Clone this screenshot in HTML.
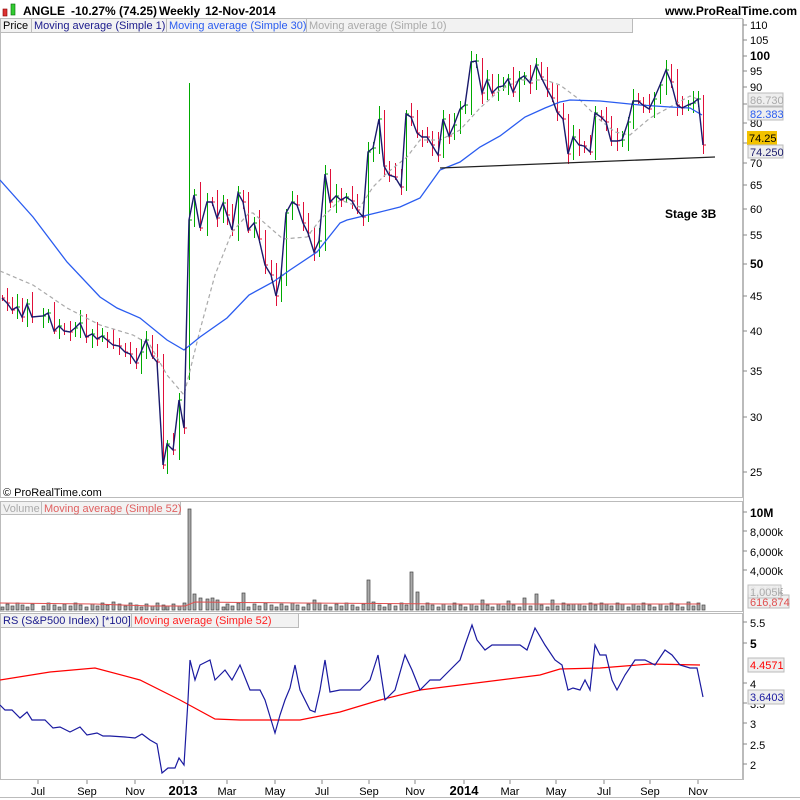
<!DOCTYPE html>
<html><head><meta charset="utf-8"><style>
body{margin:0;background:#fff;width:800px;height:800px;overflow:hidden;font-family:"Liberation Sans",Arial,sans-serif}
svg{display:block}
text{font-family:"Liberation Sans",Arial,sans-serif}
</style></head><body>
<svg id="s" width="800" height="800" xmlns="http://www.w3.org/2000/svg">
<rect width="800" height="800" fill="#fff"/>
<!-- header -->
<rect x="3" y="9" width="4" height="7" fill="#d33" stroke="#800" stroke-width="0.6"/>
<rect x="11" y="4" width="4" height="11" fill="#3c3" stroke="#060" stroke-width="0.6"/>
<text x="23" y="15" font-size="12" font-weight="bold">ANGLE</text>
<text x="71" y="15" font-size="12" font-weight="bold">-10.27% (74.25)</text>
<text x="159" y="15" font-size="12" font-weight="bold">Weekly</text>
<text x="205" y="15" font-size="12" font-weight="bold">12-Nov-2014</text>
<text x="797" y="15" font-size="12" font-weight="bold" text-anchor="end">www.ProRealTime.com</text>
<!-- panel borders -->
<rect x="0.5" y="18.5" width="742" height="479" fill="none" stroke="#bbb"/>
<rect x="0.5" y="501.5" width="742" height="110" fill="none" stroke="#bbb"/>
<rect x="0.5" y="613.5" width="742" height="166" fill="none" stroke="#bbb"/>
<line x1="0" y1="797.5" x2="800" y2="797.5" stroke="#bbb"/>
<!-- legends -->
<rect x="0.5" y="18.5" width="632" height="14" fill="#f2f2f2" stroke="#bbb"/>
<text x="3" y="29" font-size="11" fill="#000">Price</text>
<line x1="31.5" y1="19" x2="31.5" y2="32" stroke="#bbb"/>
<text x="34" y="29" font-size="11" fill="#1a1a8c">Moving average (Simple 1)</text>
<line x1="166.5" y1="19" x2="166.5" y2="32" stroke="#bbb"/>
<text x="169" y="29" font-size="11" fill="#2a5cf0">Moving average (Simple 30)</text>
<line x1="306.5" y1="19" x2="306.5" y2="32" stroke="#bbb"/>
<text x="309" y="29" font-size="11" fill="#aaa">Moving average (Simple 10)</text>
<text x="3" y="496" font-size="11">© ProRealTime.com</text>
<rect x="0.5" y="501.5" width="180" height="13" fill="#f2f2f2" stroke="#bbb"/>
<text x="3" y="512" font-size="11" fill="#aaa">Volume</text>
<line x1="41.5" y1="502" x2="41.5" y2="514" stroke="#bbb"/>
<text x="44" y="512" font-size="11" fill="#e06060">Moving average (Simple 52)</text>
<rect x="0.5" y="613.5" width="298" height="14" fill="#f2f2f2" stroke="#bbb"/>
<text x="3" y="624" font-size="11" fill="#1a1a8c">RS (S&amp;P500 Index) [*100]</text>
<line x1="131.5" y1="614" x2="131.5" y2="627" stroke="#bbb"/>
<text x="134" y="624" font-size="11" fill="#f22">Moving average (Simple 52)</text>
<text x="665" y="218" font-size="12" font-weight="bold">Stage 3B</text>
<g id="g"></g>
</svg>
<script>
var g=document.getElementById('g'),h='';
function pl(pts,st,w,extra){h+='<polyline fill="none" stroke="'+st+'" stroke-width="'+w+'" '+(extra||'')+' points="'+pts.map(function(p){return p.join(',')}).join(' ')+'"/>';}
var C=[[2,298],[7,303],[12,310],[17,307],[22,317],[27,304],[32,317],[43,316],[48,313],[54,331],[59,326],[64,331],[70,332],[75,328],[80,323],[86,337],[92,334],[97,339],[102,336],[107,340],[113,345],[119,346],[125,352],[130,354],[136,363],[141,352],[146,340],[152,356],[157,362],[163,465],[167,444],[173,450],[179,400],[184,428],[189,220],[194,195],[200,228],[207,202],[212,202],[217,218],[223,203],[227,215],[232,230],[238,193],[243,202],[248,230],[254,223],[259,239],[265,265],[271,275],[276,296],[281,275],[286,213],[292,202],[297,205],[303,223],[308,233],[314,252],[319,241],[325,174],[330,202],[336,196],[341,200],[346,197],[352,201],[357,210],[363,217],[368,152],[373,148],[379,119],[384,166],[389,175],[395,177],[401,187],[406,114],[411,117],[417,133],[422,137],[427,137],[432,145],[438,155],[443,119],[449,136],[454,125],[460,109],[465,105],[471,62],[476,61],[482,93],[487,80],[492,93],[498,87],[503,86],[508,79],[513,92],[519,79],[524,76],[530,83],[536,65],[541,77],[547,89],[552,98],[557,112],[563,119],[568,154],[573,137],[579,145],[584,146],[590,152],[595,113],[601,117],[606,122],[611,141],[617,141],[622,140],[628,122],[633,101],[638,101],[643,105],[649,109],[654,99],[660,85],[666,70],[671,82],[677,105],[682,108],[688,105],[693,103],[698,99],[703,145]];
for(var i=0;i<C.length;i++){var x=C[i][0]+0.5,y=C[i][1],py=i?C[i-1][1]:y;var up=y<py;var col=up?'#0a0':'#e0103a';
var hi=Math.min(y,py)-3-((i*7)%11),lo=Math.max(y,py)+3+((i*5)%9);
if(i==34){hi=83;lo=380}
h+='<line x1="'+x+'" y1="'+hi+'" x2="'+x+'" y2="'+lo+'" stroke="'+col+'" stroke-width="1"/>';
h+='<line x1="'+x+'" y1="'+y+'" x2="'+(x+2.5)+'" y2="'+y+'" stroke="'+col+'" stroke-width="1"/>';}
pl([[0,271],[33,285],[67,308],[100,325],[133,335],[150,345],[167,375],[184,395],[200,330],[215,275],[232,232],[249,213],[253,213],[283,239],[307,237],[320,220],[340,200],[360,207],[373,187],[387,173],[407,157],[420,140],[440,140],[460,130],[480,108],[500,90],[520,80],[545,80],[560,85],[580,100],[600,120],[615,132],[630,135],[650,118],[670,107],[690,96],[700,100]],'#aaa',1.2,'stroke-dasharray="4,3"');
pl([[0,180],[33,217],[67,262],[100,297],[117,308],[140,318],[167,340],[184,350],[200,337],[227,318],[249,295],[273,282],[290,270],[317,252],[340,223],[347,220],[380,212],[400,207],[420,198],[440,170],[460,162],[480,147],[500,136],[525,117],[545,108],[560,102],[570,100],[600,101],[620,103],[640,105],[670,107],[690,108],[702,115]],'#2a5cf0',1.3);
pl(C,'#1a1a6c',1.4);
h+='<line x1="440" y1="168" x2="715" y2="157" stroke="#222" stroke-width="1.3"/>';
var pa=[[110,25],[105,40],[100,56],[95,71],[90,87],[85,104],[80,123],[75,143],[70,163],[65,185],[60,209],[55,235],[50,264],[45,296],[40,331],[35,371],[30,417],[25,472]];
h+='<line x1="743.5" y1="19" x2="743.5" y2="780" stroke="#bbb"/>';
pa.forEach(function(a){var b=(a[0]==100||a[0]==50);h+='<line x1="743" y1="'+a[1]+'" x2="747" y2="'+a[1]+'" stroke="#888"/><text x="750" y="'+(a[1]+4)+'" font-size="'+(b?12:11)+'" '+(b?'font-weight="bold"':'')+'>'+a[0]+'</text>';});
h+='<rect x="748" y="93" width="35" height="13" fill="#eee" stroke="#bbb"/><text x="750" y="104" font-size="11" fill="#aaa">86.730</text>';
h+='<rect x="748" y="107" width="35" height="13" fill="#eee" stroke="#bbb"/><text x="750" y="118" font-size="11" fill="#2a5cf0">82.383</text>';
h+='<rect x="747" y="131" width="30" height="14" fill="#f3c200"/><text x="749" y="142" font-size="11">74.25</text>';
h+='<rect x="748" y="145" width="35" height="13" fill="#eee" stroke="#bbb"/><text x="750" y="156" font-size="11" fill="#1a1a6c">74.250</text>';
var V=[];for(var i=0;i<C.length;i++){var v=3+((i*13)%5);V.push(v);}
var sp={34:101,35:16,36:12,37:11,38:12,39:10,44:17,20:8,30:4,67:30,68:8,75:38,76:18,57:10,88:10,93:9,96:12,101:10,98:16,110:7,105:6,114:6,126:8,131:6,140:8};
for(var k in sp)V[k]=sp[k];
for(var i=0;i<C.length;i++){var x=C[i][0]-1;h+='<rect x="'+x+'" y="'+(610-V[i])+'" width="3" height="'+V[i]+'" fill="#aaa" stroke="#444" stroke-width="0.7"/>';}
pl([[0,603],[95,604],[150,606],[185,606],[195,602],[300,603],[450,604],[600,604],[700,604]],'#e05050',1);
[[10,'10M',1,512],[8,'8,000k',0,531],[6,'6,000k',0,551],[4,'4,000k',0,570]].forEach(function(a){h+='<line x1="743" y1="'+a[3]+'" x2="747" y2="'+a[3]+'" stroke="#888"/><text x="750" y="'+(a[3]+5)+'" font-size="'+(a[2]?12:11)+'" '+(a[2]?'font-weight="bold"':'')+'>'+a[1]+'</text>';});
h+='<text x="750" y="594" font-size="11" fill="#888">2,000k</text><rect x="748" y="595" width="41" height="13" fill="#eee" stroke="#bbb"/><text x="750" y="606" font-size="11" fill="#e05050">616,874</text><rect x="748" y="585" width="33" height="13" fill="#eee" stroke="#bbb" opacity="0.9"/><text x="750" y="596" font-size="11" fill="#aaa">1,005k</text>';
pl([[0,680],[50,672],[95,668],[140,680],[180,700],[215,719],[240,720],[300,720],[340,712],[380,700],[420,690],[460,685],[500,680],[540,675],[560,669],[600,668],[650,664],[700,665]],'#f00',1.2);
pl([[0,705],[5,710],[12,710],[20,718],[27,712],[32,720],[45,720],[53,728],[60,727],[70,732],[80,727],[87,735],[97,733],[103,736],[110,736],[125,737],[135,738],[142,734],[150,740],[157,744],[162,773],[168,768],[175,768],[179,758],[184,765],[188,700],[190,660],[195,680],[200,665],[210,660],[215,680],[225,670],[232,680],[240,665],[250,690],[260,690],[265,700],[275,733],[280,715],[285,700],[290,688],[295,665],[300,690],[310,710],[315,712],[320,690],[325,660],[330,692],[340,690],[350,690],[360,690],[365,685],[370,680],[378,655],[385,700],[395,690],[405,655],[412,670],[420,690],[430,680],[440,680],[450,670],[460,660],[465,645],[472,625],[477,640],[485,650],[492,645],[500,645],[510,645],[520,645],[527,650],[535,628],[545,645],[555,660],[562,665],[568,690],[573,688],[580,690],[585,680],[590,690],[595,645],[600,655],[606,655],[612,680],[617,690],[625,675],[635,660],[645,660],[655,665],[665,650],[672,655],[680,665],[690,668],[697,668],[703,697]],'#1a1aa0',1.2);
[['5.5',622,0],['5',643,1],['4',683,0],['3.5',703,0],['3',723,0],['2.5',744,0],['2',764,0]].forEach(function(a){h+='<line x1="743" y1="'+a[1]+'" x2="747" y2="'+a[1]+'" stroke="#888"/><text x="750" y="'+(a[1]+5)+'" font-size="'+(a[2]?12:11)+'" '+(a[2]?'font-weight="bold"':'')+'>'+a[0]+'</text>';});
h+='<rect x="748" y="658" width="36" height="14" fill="#eee" stroke="#bbb"/><text x="750" y="669" font-size="11" fill="#f00">4.4571</text>';
h+='<rect x="748" y="690" width="36" height="14" fill="#eee" stroke="#bbb"/><text x="750" y="701" font-size="11" fill="#1a1aa0">3.6403</text>';
[['Jul',38],['Sep',87],['Nov',135],['2013',183,1],['Mar',227],['May',275],['Jul',322],['Sep',369],['Nov',415],['2014',464,1],['Mar',510],['May',556],['Jul',604],['Sep',650],['Nov',698]].forEach(function(a){h+='<line x1="'+a[1]+'" y1="780" x2="'+a[1]+'" y2="784" stroke="#888"/><text x="'+a[1]+'" y="795" font-size="'+(a[2]?13:11)+'" '+(a[2]?'font-weight="bold"':'')+' text-anchor="middle">'+a[0]+'</text>';});
g.innerHTML=h;
</script>
</body></html>
